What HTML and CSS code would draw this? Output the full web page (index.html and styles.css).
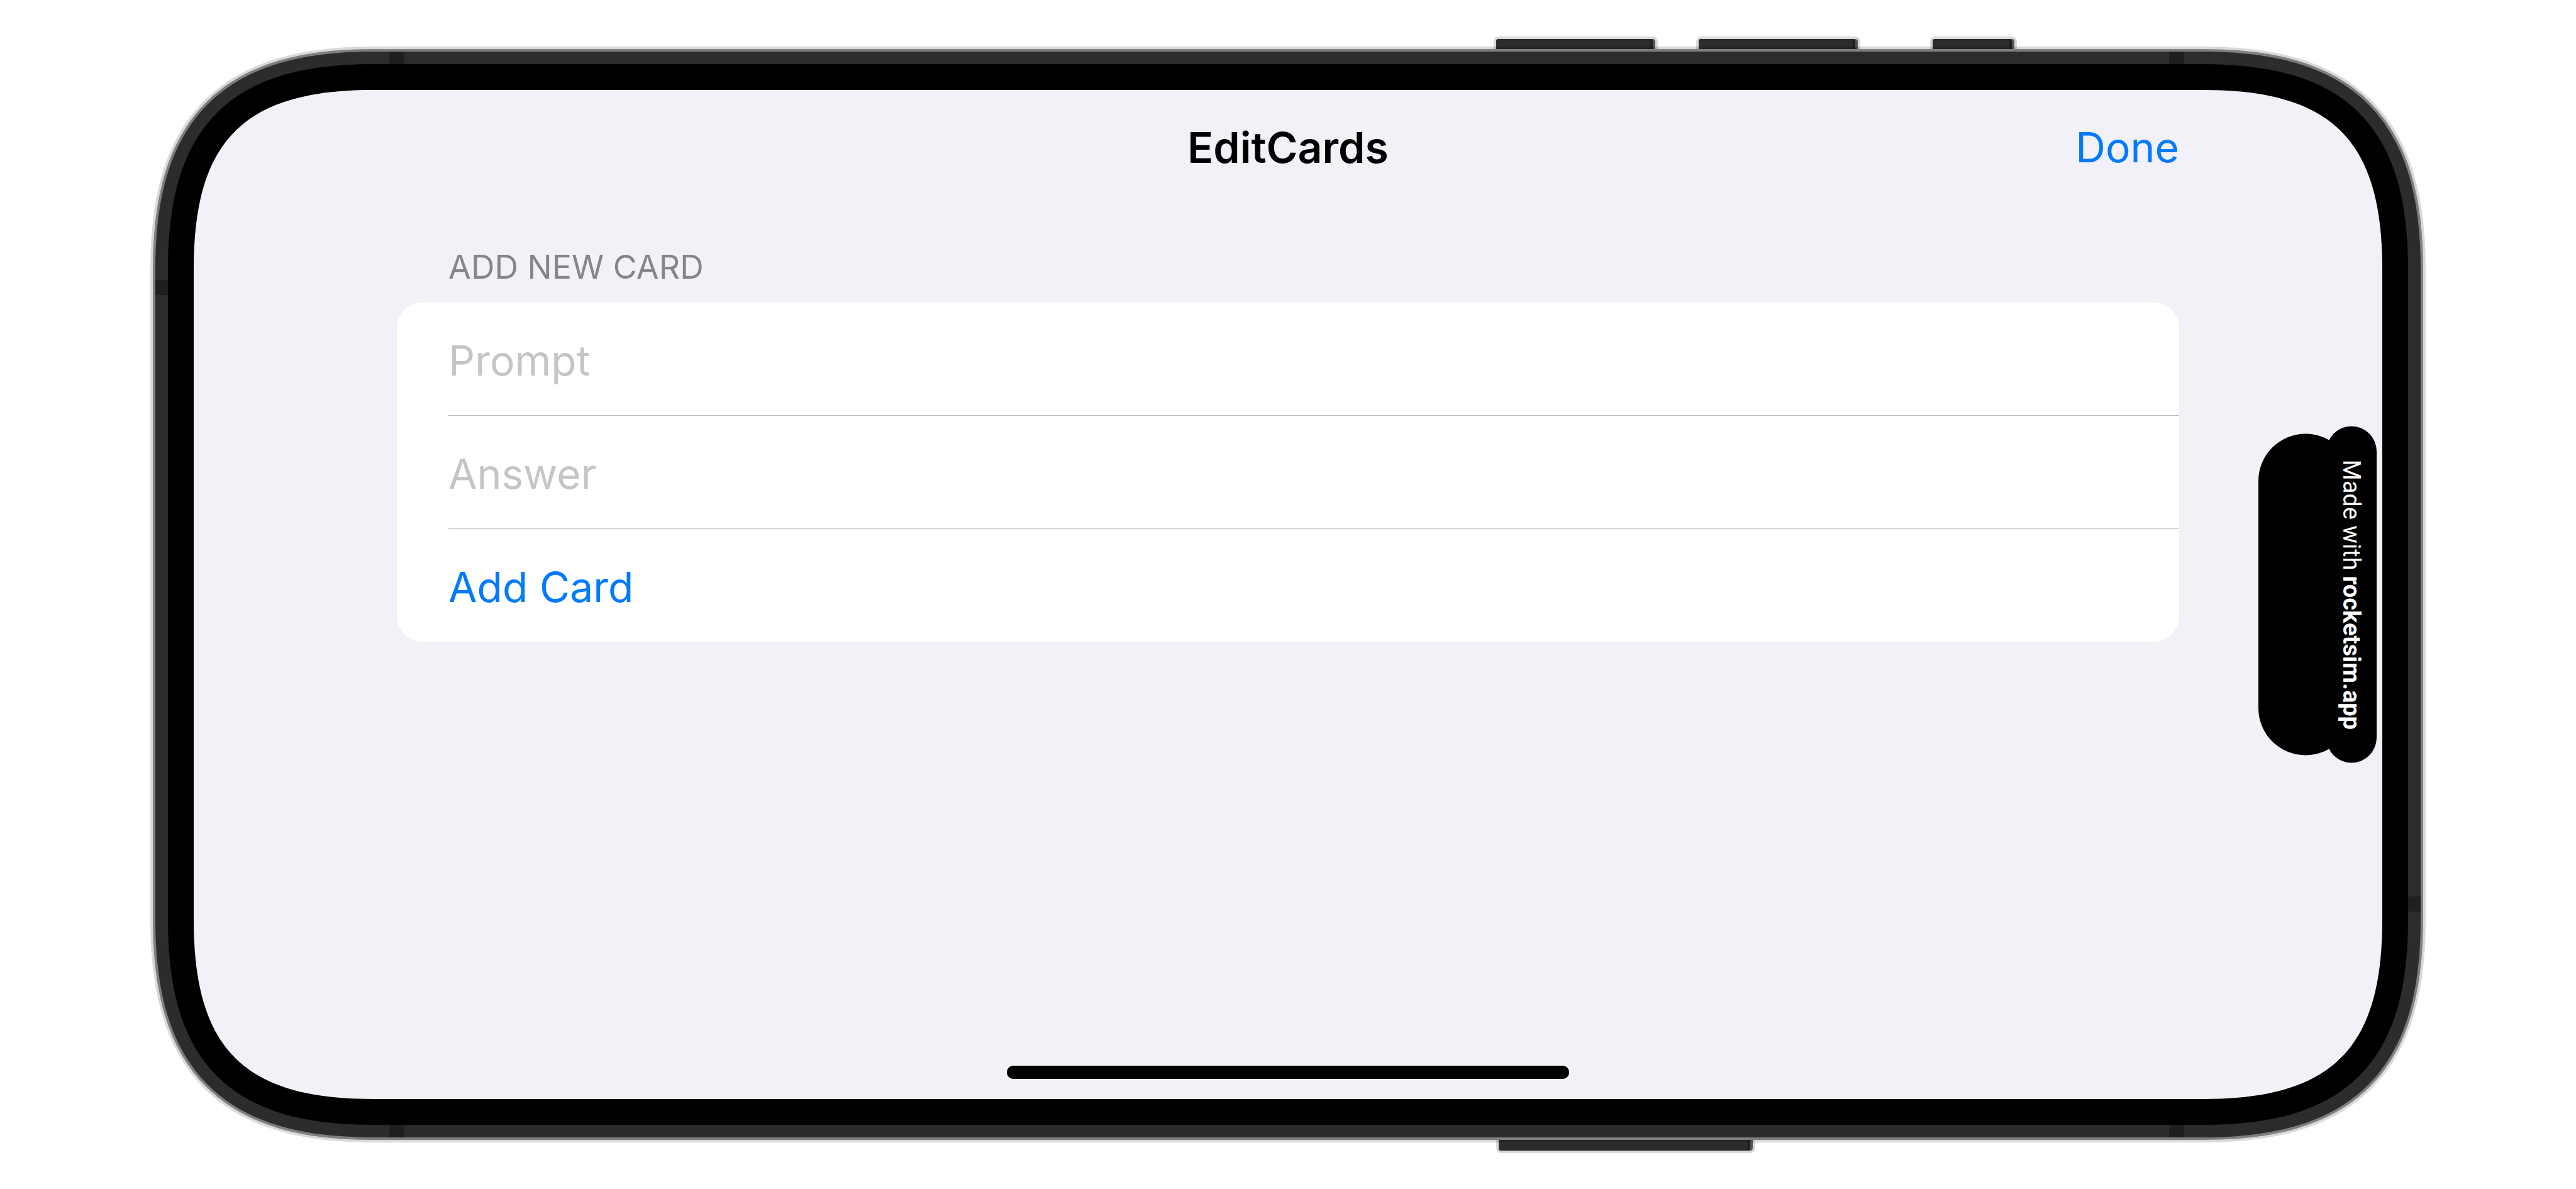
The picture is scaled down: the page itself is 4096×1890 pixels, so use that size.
FILE: index.html
```html
<!DOCTYPE html>
<html lang="en">
<head>
<meta charset="utf-8">
<title>EditCards</title>
<link rel="stylesheet" href="styles.css">
</head>
<body>
<div class="stage">
  <svg class="device" viewBox="0 0 4096 1890" aria-hidden="true">
    <defs>
      <path id="glass" d="M593 143H3503c205 0 285 80 285 285V1462c0 205-80 285-285 285H593c-205 0-285-80-285-285V428c0-205 80-285 285-285z"/>
    </defs>
    <!-- side buttons -->
    <g fill="#d9d9d9">
      <rect x="2375" y="58" width="261" height="40" rx="8"/>
      <rect x="2697" y="58" width="261" height="40" rx="8"/>
      <rect x="3069" y="58" width="138" height="40" rx="8"/>
      <rect x="2379" y="1790" width="412" height="43" rx="8"/>
    </g>
    <g fill="#555">
      <rect x="2379" y="62" width="253" height="36" rx="4"/>
      <rect x="2701" y="62" width="253" height="36" rx="4"/>
      <rect x="3073" y="62" width="130" height="36" rx="4"/>
      <rect x="2383" y="1790" width="404" height="39" rx="4"/>
    </g>
    <g fill="#1f1f1f">
      <rect x="2379" y="62" width="249" height="36" rx="4"/>
      <rect x="2701" y="62" width="249" height="36" rx="4"/>
      <rect x="3073" y="62" width="126" height="36" rx="4"/>
      <rect x="2383" y="1790" width="400" height="39" rx="4"/>
    </g>
    <g fill="#2c2c2c">
      <rect x="2379" y="62" width="245" height="36" rx="4"/>
      <rect x="2701" y="62" width="245" height="36" rx="4"/>
      <rect x="3073" y="62" width="122" height="36" rx="4"/>
      <rect x="2383" y="1790" width="396" height="39" rx="4"/>
    </g>
    <!-- casing, from the outer edge inwards -->
    <g fill="none">
      <use href="#glass" stroke="#000" stroke-opacity=".15" stroke-width="138"/>
      <use href="#glass" stroke="#7f7f7f" stroke-width="130"/>
      <use href="#glass" stroke="#2c2c2c" stroke-width="122"/>
    </g>
    <!-- antenna bands -->
    <path fill="#1f1f1f" d="M619 82h24v30h-24zM3449 82h24v30h-24zM619 1780h24v28h-24zM3449 1780h24v28h-24zM247 445h30v24h-30zM3820 1425h29v24h-29z"/>
    <use href="#glass" fill="#f2f1f7" stroke="#000" stroke-width="82"/>
    <use href="#glass" fill="#f2f1f7"/>
  </svg>

  <main class="screen">
    <header class="nav">
      <h1 class="nav-title">EditCards</h1>
      <button class="nav-done" type="button">Done</button>
    </header>
    <form class="section">
      <h2 class="section-title">ADD NEW CARD</h2>
      <div class="card">
        <div class="row"><input class="field" type="text" placeholder="Prompt" aria-label="Prompt"></div>
        <div class="row"><input class="field" type="text" placeholder="Answer" aria-label="Answer"></div>
        <div class="row"><button class="add" type="button">Add Card</button></div>
      </div>
    </form>
    <div class="home-indicator"></div>
    <div class="island"></div>
    <p class="badge">Made with&nbsp;<b>rocketsim.app</b></p>
  </main>
</div>
</body>
</html>
```
FILE: styles.css
```css
* {
  box-sizing: border-box;
}

body {
  margin: 0;
  background: #fff;
  font-family: Inter, "Liberation Sans", sans-serif;
}

.stage {
  position: relative;
  display: flex;
  min-height: 100vh;
  padding: 143px 308px;
}

.device {
  position: absolute;
  inset: 0;
  width: 100%;
  height: 100%;
}

.screen {
  position: relative;
  flex: 1;
  display: flex;
  flex-direction: column;
  padding: 0 323px 32px;
}

.nav {
  display: grid;
  grid-template-columns: 1fr auto 1fr;
  align-items: center;
  height: 181px;
}

.nav-title {
  grid-column: 2;
  margin: 0;
  font-size: 68px;
  font-weight: 600;
  line-height: 80px;
}

.nav-done,
.add {
  padding: 0;
  border: 0;
  background: none;
  color: #007aff;
  font-family: inherit;
  font-size: 66px;
  line-height: 80px;
}

.nav-done {
  justify-self: end;
}

.section {
  padding-top: 71px;
}

.section-title {
  margin: 0;
  padding: 0 82px 26px;
  color: #85858b;
  font-size: 52px;
  font-weight: 400;
  line-height: 60px;
}

.card {
  padding-left: 82px;
  border-radius: 40px;
  background: #fff;
}

.row {
  display: flex;
  align-items: center;
  height: 180px;
  padding-top: 4px;
  border-bottom: 1px solid #bdbdc0;
}

.row:last-child {
  height: 179px;
  border-bottom: 0;
}

.field {
  flex: 1;
  height: 80px;
  padding: 0;
  border: 0;
  outline: 0;
  background: none;
  font-family: inherit;
  font-size: 66px;
}

.field::placeholder {
  color: #c5c5c7;
  opacity: 1;
}

.add {
  flex: 1;
  text-align: left;
}

.home-indicator {
  width: 894px;
  height: 21px;
  margin: auto auto 0;
  border-radius: 10px;
  background: #000;
}

.island {
  position: absolute;
  top: 50%;
  right: 47px;
  width: 150px;
  height: 511px;
  border-radius: 75px;
  background: #000;
  transform: translateY(-50%);
}

.badge {
  position: absolute;
  top: 50%;
  right: 9px;
  display: flex;
  align-items: center;
  justify-content: center;
  width: 80px;
  height: 535px;
  margin: 0;
  border-radius: 40px;
  background: #000;
  color: #fff;
  font-family: Roboto, sans-serif;
  font-size: 38px;
  line-height: 80px;
  white-space: nowrap;
  writing-mode: vertical-rl;
  transform: translateY(-50%);
}

.badge b {
  font-weight: 700;
}
```
